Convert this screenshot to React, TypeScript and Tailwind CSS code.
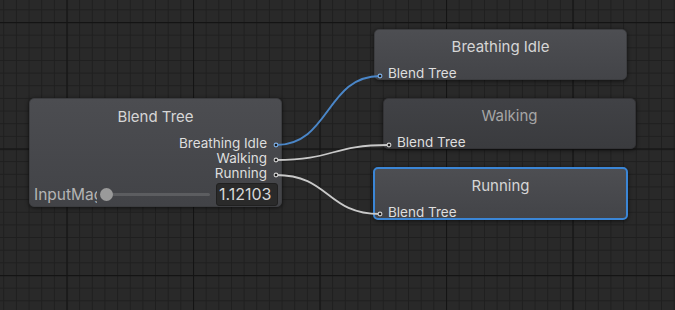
import React from 'react';

const font = { fontFamily: 'Inter, "Noto Sans", sans-serif' };

function Grid() {
    return (
        <svg className="absolute inset-0" width={675} height={310}>
            <defs>
                <pattern id="minor" x={66.5} y={22} width={12.65} height={12.65} patternUnits="userSpaceOnUse">
                    <path d="M0 0.5H12.65M0.5 0V12.65" stroke="#1f1f1f" strokeWidth={1} fill="none" />
                </pattern>
                <pattern id="major" x={66.5} y={22} width={126.5} height={126.5} patternUnits="userSpaceOnUse">
                    <path d="M0 0.5H126.5M0.5 0V126.5" stroke="#141414" strokeWidth={1.3} fill="none" />
                </pattern>
            </defs>
            <rect width={675} height={310} fill="#292929" />
            <rect width={675} height={310} fill="url(#minor)" />
            <rect width={675} height={310} fill="url(#major)" />
        </svg>
    );
}

function StateNode({ title, className, dim }: { title: string; className: string; dim?: boolean }) {
    return (
        <div
            className={`absolute w-[253px] h-[51px] rounded-[5px] flex flex-col shadow-[0_1px_4px_rgba(0,0,0,0.6)] ${dim ? 'bg-gradient-to-b from-[#414246] to-[#3a3b3e] border border-[#333336]' : 'bg-gradient-to-b from-[#4d4e52] to-[#434448] border border-[#3c3d40]'} ${className}`}
        >
            <div className={`pt-[8px] text-center text-[15px] leading-[18px] ${dim ? 'text-[#a6a6a6]' : 'text-[#d6d6d6]'}`}>{title}</div>
            <div className="mt-[10px] pl-[13px] text-[13.5px] leading-[14px] text-[#dedede]">Blend Tree</div>
        </div>
    );
}

function BlendTreeNode() {
    return (
        <div className="absolute left-[29px] top-[98px] w-[253px] h-[109px] rounded-[5px] bg-gradient-to-b from-[#4c4d51] to-[#424347] border border-[#3c3d40] shadow-[0_1px_4px_rgba(0,0,0,0.6)] flex flex-col">
            <div className="pt-[9px] text-center text-[15px] leading-[18px] text-[#d6d6d6]">Blend Tree</div>
            <div className="mt-[10px] flex flex-col items-end pr-[14px] text-[13.5px] leading-[15px] text-[#dedede]">
                <span>Breathing Idle</span>
                <span>Walking</span>
                <span>Running</span>
            </div>
            <div className="mt-[2px] flex items-center pl-[4px] pr-[3px]">
                <div className="w-[63px] overflow-hidden whitespace-nowrap text-[15.5px] leading-[23px] text-[#b4b4b4]">InputMag</div>
                <div className="relative flex-1 h-[23px] flex items-center">
                    <div className="ml-[8px] mr-[2px] h-[3px] flex-1 rounded-full bg-[#5c5d60]" />
                    <div className="absolute left-[3px] top-[5px] w-[13px] h-[13px] rounded-full bg-[#9a9a9a]" />
                </div>
                <div className="ml-[4px] w-[62px] h-[23px] rounded-[3px] bg-[#2a2a2a] border border-[#202020] text-[16px] leading-[21px] text-[#d8d8d8] pl-[2px]">1.12103</div>
            </div>
        </div>
    );
}

function Wires() {
    const dot = (x: number, y: number, c: string) => (
        <circle cx={x} cy={y} r={1.9} fill="#1c1c1c" stroke={c} strokeWidth={1.1} />
    );
    return (
        <svg className="absolute inset-0 pointer-events-none" width={675} height={310}>
            <path d="M276 145 C330 145 326 76 380 76" stroke="#4a86c8" strokeWidth={2} fill="none" />
            <path d="M276 160 C334 160 331 145 389 145" stroke="#c9c9c9" strokeWidth={1.8} fill="none" />
            <path d="M276 175 C330 175 326 214 380 214" stroke="#c9c9c9" strokeWidth={1.8} fill="none" />
            {dot(276, 145, '#7fb0e6')}
            {dot(276, 160, '#d0d0d0')}
            {dot(276, 175, '#d0d0d0')}
            {dot(380, 76, '#7fb0e6')}
            {dot(389, 145, '#d0d0d0')}
            {dot(380, 214, '#d0d0d0')}
        </svg>
    );
}

export default function App() {
    return (
        <div className="relative w-[675px] h-[310px] overflow-hidden bg-[#292929]" style={font}>
            <Grid />
            <BlendTreeNode />
            <StateNode title="Breathing Idle" className="left-[374px] top-[29px]" />
            <StateNode title="Walking" className="left-[383px] top-[98px]" dim />
            <StateNode
                title="Running"
                className="left-[373px] top-[167px] !h-[53px] !w-[255px] !border-2 !border-[#3b86d6] shadow-[0_0_6px_2px_rgba(50,130,220,0.55)]"
            />
            <Wires />
        </div>
    );
}
